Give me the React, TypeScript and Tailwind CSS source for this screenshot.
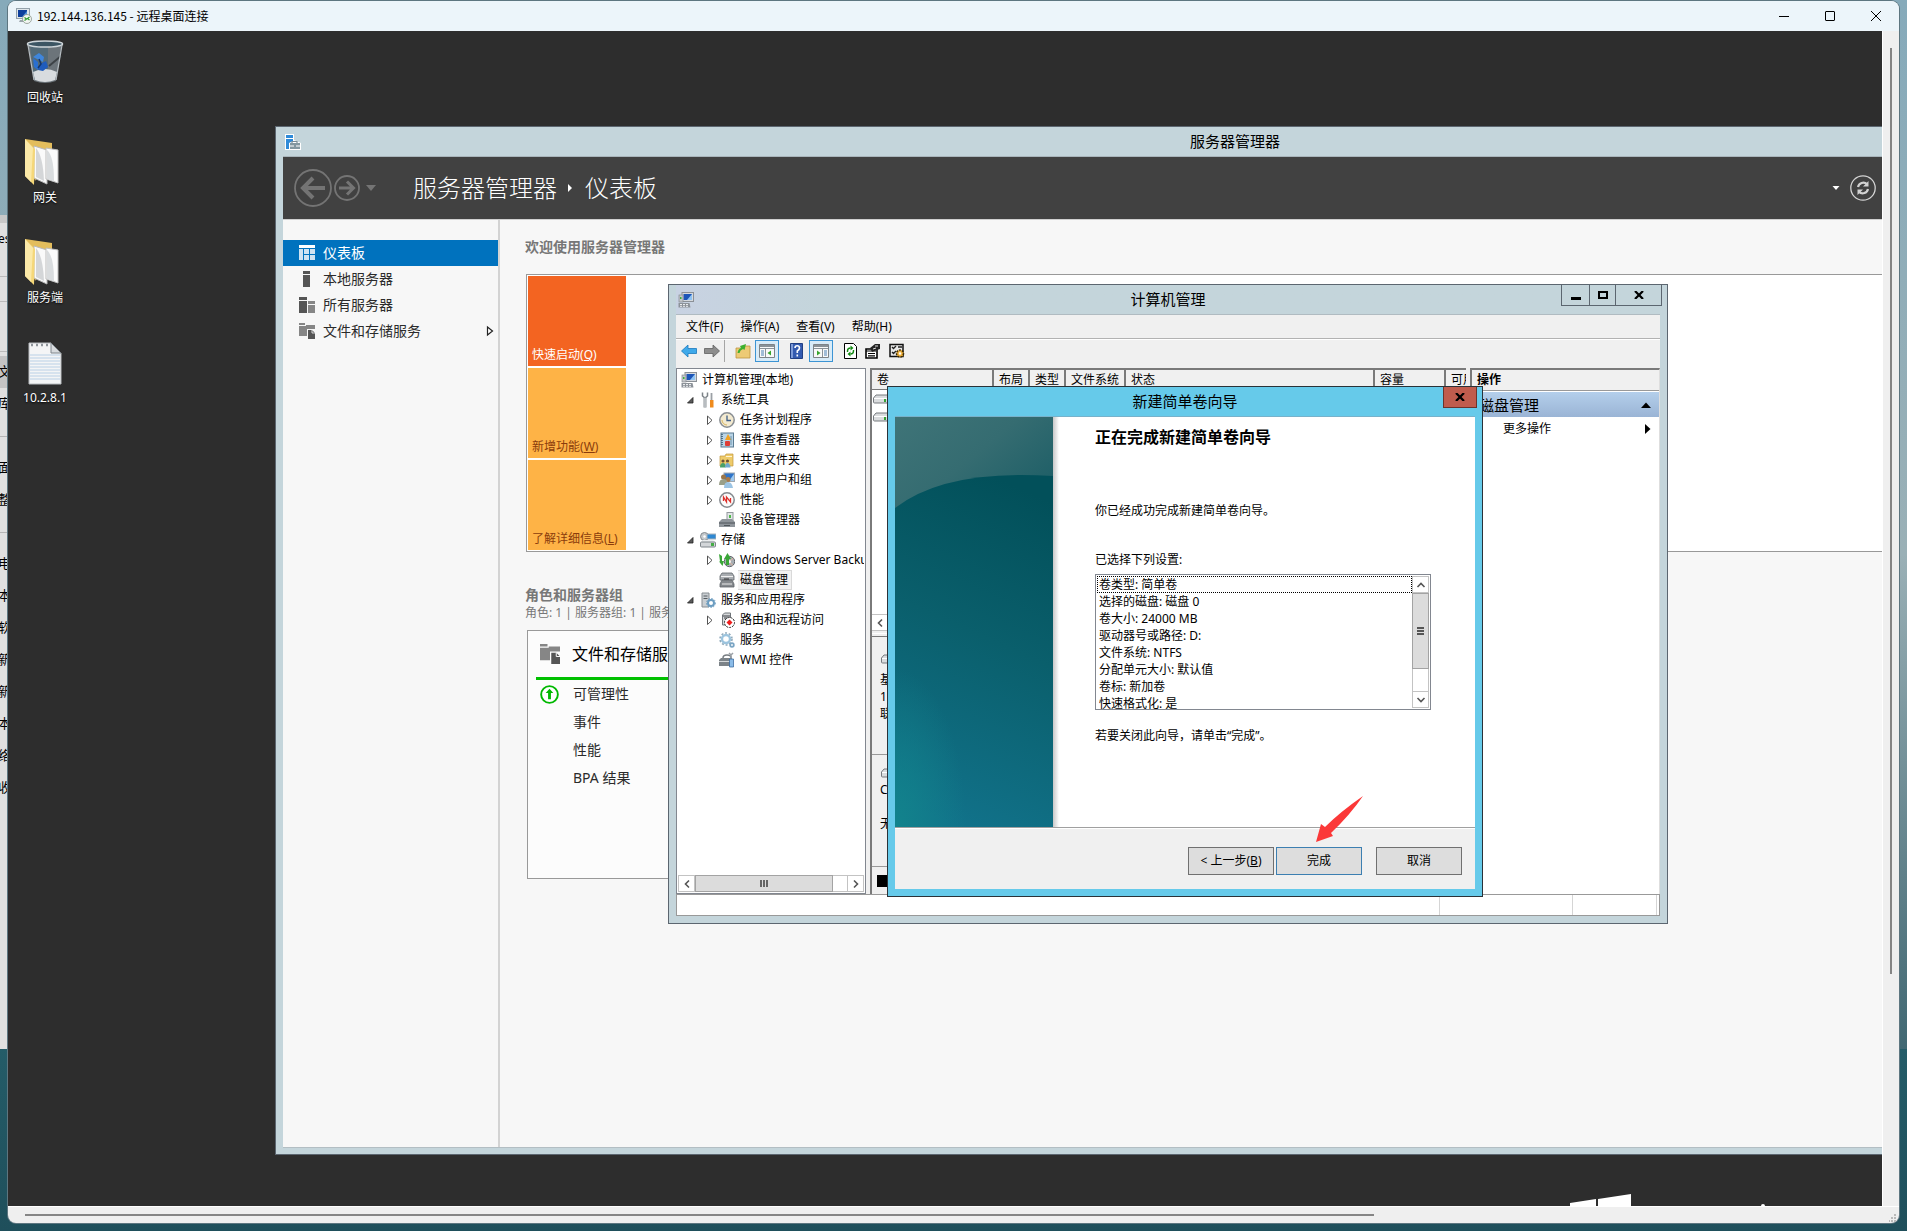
import type { ReactNode } from 'react'
import clsx from 'clsx'

const settings = [
  '卷类型: 简单卷',
  '选择的磁盘: 磁盘 0',
  '卷大小: 24000 MB',
  '驱动器号或路径: D:',
  '文件系统: NTFS',
  '分配单元大小: 默认值',
  '卷标: 新加卷',
  '快速格式化: 是',
]

const columns = [
  { label: '卷', width: 'w-[122px]' },
  { label: '布局', width: 'w-9' },
  { label: '类型', width: 'w-9' },
  { label: '文件系统', width: 'w-[60px]' },
  { label: '状态', width: 'w-[249px]' },
  { label: '容量', width: 'w-[71px]' },
  { label: '可用', width: 'w-5' },
]

type TreeItem = {
  label: string
  level: 0 | 1 | 2
  icon: ReactNode
  arrow?: 'open' | 'closed'
  selected?: boolean
}

/* ---------- icons ---------- */

function ComputerIcon() {
  return (
    <svg className="size-4 shrink-0" viewBox="0 0 16 16">
      <rect x="4" y="0.5" width="11.5" height="9" fill="#d5d9de" stroke="#8b9096" />
      <rect x="5.5" y="2" width="8.500" height="6" fill="#1c55b8" />
      <path d="M9 8L14 2v6z" fill="#8fc3f2" />
      <rect x="1" y="3" width="4" height="7" fill="#c3c7cb" stroke="#868b90" strokeWidth="0.7" />
      <rect x="2" y="5" width="1.500" height="2" fill="#3bb03b" />
      <path d="M0.500 11h11l1 4.500h-12z" fill="#8c9299" />
      <path d="M2 12.500h8M2 14.300h9" stroke="#e9ecee" strokeDasharray="2 1" />
    </svg>
  )
}

function RemoteIcon() {
  return (
    <svg className="size-4 shrink-0" viewBox="0 0 16 16">
      <rect x="0.500" y="0.500" width="13" height="10" fill="#dfe6ea" stroke="#93a1aa" />
      <rect x="2" y="2" width="9" height="7" fill="#0d3f9c" />
      <path d="M6 9l5-6v6z" fill="#4f93dc" />
      <path d="M4 12h5v2H3z" fill="#9aa5ac" />
      <circle cx="11" cy="11" r="4.500" fill="#f3f6f3" stroke="#8a958c" strokeWidth="0.8" />
      <path d="M8.500 9.500l2 1.500-2 1.500M13.500 9l-2 1.500 2 1.500" stroke="#2f9d2f" strokeWidth="1.200" fill="none" />
    </svg>
  )
}

function RecycleBinIcon() {
  return (
    <svg className="size-12" viewBox="0 0 48 48">
      <path d="M7 6h34l-6 38q-11 4-22 0z" fill="#737c83" opacity="0.9" />
      <path d="M9 8h18v36q-9 0-14-1.500z" fill="#4d6877" opacity="0.8" />
      <path d="M12 35q12-6 24 0l-2 8q-10 4-20 0z" fill="#d8dcdf" />
      <path d="M12 20l6-4 5 4-1 5z" fill="#3f86dc" />
      <path d="M12 21l5 4v8l-4-3z" fill="#2a6fd0" />
      <path d="M19 27l6-3 2 6-5 4-5-1z" fill="#1f5cbd" />
      <path d="M18 22l2 5-3 4" stroke="#12366f" strokeWidth="1.500" fill="none" />
      <path d="M40 19L28 29" stroke="#3d4246" strokeWidth="2" />
      <ellipse cx="24" cy="7" rx="17.500" ry="3" fill="#3c5563" stroke="#cfd6da" strokeWidth="1.500" />
      <path d="M7 8l6 35M41 8l-6 35" stroke="#b3babf" strokeWidth="1.300" />
    </svg>
  )
}

function FolderIcon() {
  return (
    <svg className="size-12" viewBox="0 0 48 48">
      <path d="M4 2l27 4v8L14 44z" fill="#e3bd5c" />
      <path d="M13 9l13 4v34l-13-6z" fill="#fafafa" stroke="#b9b9b9" />
      <path d="M15 11q7 8 8 33l-8-4z" fill="#d4d6d8" />
      <path d="M25 11l12 2v33l-12-4z" fill="#fbfbfb" stroke="#bdbdbd" />
      <path d="M26 13q7 6 7 31l-7-2z" fill="#d9dcde" />
      <path d="M4 2l10 10-1 36-9-9z" fill="#f5d778" />
      <path d="M4 2l8 9-2 34-6-6z" fill="#fbe9a8" />
    </svg>
  )
}

function NotepadIcon() {
  return (
    <svg className="size-12" viewBox="0 0 48 48">
      <path d="M8 6h22l10 10v31H8z" fill="#f4f5f6" stroke="#b8bcc0" />
      <path d="M30 6v10h10z" fill="#d8dbde" stroke="#7f868c" />
      <path d="M9 18h30M9 21h30M9 24h30M9 27h30M9 30h30M9 33h30M9 36h30M9 39h30M9 42h30" stroke="#b9d0e6" />
      <path d="M10 8h19" stroke="#8f959b" strokeWidth="2.500" strokeDasharray="2 3" />
    </svg>
  )
}

function ServerManagerIcon() {
  return (
    <svg className="size-4" viewBox="0 0 16 16">
      <path d="M0 0h9v6l7 3v7H0z" fill="#fff" />
      <path d="M1 1h7v3H1zM1 5h7v2L4 9v6H1z" fill="#2f8ad8" />
      <path d="M7 9V7.500h5V9" fill="none" stroke="#788b94" strokeWidth="1.200" />
      <path d="M5 9h10v6H5z" fill="#8397a0" />
      <path d="M5 12h4M11 12h4" stroke="#fff" />
    </svg>
  )
}

function DashboardIcon() {
  return (
    <svg className="size-4" viewBox="0 0 16 16">
      <path d="M0 0h16v3H0z" fill="#fff" />
      <path d="M0 4h4v11H0zM5 4h5v5H5zM11 4h5v5h-5zM5 10h5v5H5zM11 10h5v5h-5z" fill="#cfe3f2" />
    </svg>
  )
}

function ServerIcon() {
  return (
    <svg className="size-4" viewBox="0 0 16 16">
      <path d="M4 0h7v3H4zM4 4h7v12H4z" fill="#555" />
    </svg>
  )
}

function ServersIcon() {
  return (
    <svg className="size-4" viewBox="0 0 16 16">
      <path d="M0 0h8v3H0zM0 4h8v12H0z" fill="#555" />
      <path d="M9 4h7v3H9zM9 8h7v8H9z" fill="#868686" />
    </svg>
  )
}

function StorageIcon({ className }: { className: string }) {
  return (
    <svg className={className} viewBox="0 0 16 16">
      <path d="M0 0h6v2H0zM0 3h7V2h9v4H8v7H0z" fill="#868686" />
      <path d="M9 7h4l3 3v6H9z" fill="#555" />
      <path d="M13 7v3h3" fill="none" stroke="#f7f7f7" strokeWidth="0.800" />
    </svg>
  )
}

function ToolsIcon() {
  return (
    <svg className="size-4 shrink-0" viewBox="0 0 16 16">
      <path d="M2.500 0.500v3.500l2.500 2 2.500-2V0.500" stroke="#7d8388" strokeWidth="1.500" fill="none" />
      <path d="M5 5v10.500" stroke="#8e9499" strokeWidth="3" />
      <path d="M5 6v9" stroke="#e2e5e7" />
      <path d="M11.500 1v7" stroke="#9ba0a5" strokeWidth="1.800" />
      <path d="M10 8h3.500v7.500H10z" fill="#ef8b1d" />
    </svg>
  )
}

function ClockIcon() {
  return (
    <svg className="size-4 shrink-0" viewBox="0 0 16 16">
      <circle cx="8" cy="8" r="7.200" fill="#f3ead0" stroke="#898e93" strokeWidth="1.500" />
      <path d="M8 3.500V8.500h4" stroke="#3e5d86" strokeWidth="1.300" fill="none" />
      <path d="M3 8a5 5 0 0 0 5 5" stroke="#d8b560" fill="none" />
    </svg>
  )
}

function EventIcon() {
  return (
    <svg className="size-4 shrink-0" viewBox="0 0 16 16">
      <rect x="2" y="1" width="12.500" height="14" fill="#b9d4e6" stroke="#5a7b92" />
      <path d="M3 2v12" stroke="#35556d" strokeWidth="1.500" strokeDasharray="1 1" />
      <path d="M9 2l3.500 6H6z" fill="#f1a120" />
      <rect x="6" y="9" width="5" height="5" rx="1" fill="#df3d35" />
      <path d="M12 4v9" stroke="#6f94ad" />
    </svg>
  )
}

function SharedFolderIcon() {
  return (
    <svg className="size-4 shrink-0" viewBox="0 0 16 16">
      <path d="M1 4h5l1-2h7v12H1z" fill="#eecb6a" stroke="#c0973c" strokeWidth="0.700" />
      <path d="M7 4h6v1H7z" fill="#fff5d6" />
      <circle cx="4" cy="9" r="1.600" fill="#6d5136" />
      <circle cx="8.500" cy="9" r="1.600" fill="#6d5136" />
      <path d="M1 15.500q0-4.500 3-4.500t2.500 4.500z" fill="#4aa069" />
      <path d="M6 15.500q0-4.500 2.500-4.500t3 4.500z" fill="#6fa9cf" />
    </svg>
  )
}

function UsersIcon() {
  return (
    <svg className="size-4 shrink-0" viewBox="0 0 16 16">
      <rect x="5" y="1" width="10.500" height="8.500" fill="#2f74c9" stroke="#a0a8b0" />
      <path d="M10 9l5-7v7z" fill="#9fcaf0" />
      <circle cx="4.500" cy="5" r="2.500" fill="#9a7548" />
      <circle cx="9" cy="7.500" r="2.500" fill="#a87a4c" />
      <path d="M0 13q0-6 4.500-6t4 6z" fill="#9a9f88" />
      <path d="M5 16q0-6 4-6t5 6z" fill="#9cc4e4" />
    </svg>
  )
}

function PerformanceIcon() {
  return (
    <svg className="size-4 shrink-0" viewBox="0 0 16 16">
      <circle cx="8" cy="8" r="7.200" fill="#fbfbfb" stroke="#84898e" strokeWidth="1.500" />
      <path d="M4.500 9V5l3 5V5l4 5V6" stroke="#dd2f2a" strokeWidth="1.300" fill="none" />
    </svg>
  )
}

function DeviceIcon() {
  return (
    <svg className="size-4 shrink-0" viewBox="0 0 16 16">
      <rect x="8" y="0.500" width="6" height="9" fill="#e4e7e9" stroke="#94999d" />
      <path d="M10 3h2v3h-2z" fill="#4fb948" />
      <path d="M0 10l3-3h10l3 3v5H0z" fill="#8f959b" />
      <path d="M0 11h16M5 13.500h6" stroke="#4f555a" />
    </svg>
  )
}

function StorageStackIcon() {
  return (
    <svg className="size-4 shrink-0" viewBox="0 0 16 16">
      <circle cx="4.500" cy="4.500" r="4" fill="#c5c9cc" stroke="#82888d" />
      <circle cx="4.500" cy="4.500" r="1.200" fill="#fff" />
      <rect x="7" y="2" width="9" height="5" fill="#2f88d2" stroke="#a9b3bb" />
      <path d="M1 10l2-2h10l2 2z" fill="#eceeef" />
      <rect x="0.500" y="10" width="15" height="5" rx="1" fill="#d3d6d9" stroke="#7f858a" />
      <path d="M11 11h3v3h-3z" fill="#45ad45" />
    </svg>
  )
}

function BackupIcon() {
  return (
    <svg className="size-4 shrink-0" viewBox="0 0 16 16">
      <circle cx="10.500" cy="9.500" r="5.200" fill="#a8aeb3" stroke="#5e6469" />
      <path d="M10.500 9.500l4-3.500M10.500 9.500l3 4" stroke="#e4b6a2" />
      <circle cx="10.500" cy="9.500" r="1.500" fill="#f3f3f3" />
      <path d="M0 2l3 2v5h2L3.500 14 0 9.500h1zM7 13V7H5l3.500-6L12 7h-2v6z" fill="#3aa637" />
    </svg>
  )
}

function DiskIcon() {
  return (
    <svg className="size-4 shrink-0" viewBox="0 0 16 16">
      <path d="M1 4l2-3h10l2 3v4H1z" fill="#a9adb1" stroke="#5d6368" strokeWidth="0.800" />
      <path d="M2 4.500h12" stroke="#f1f1f1" />
      <path d="M1 12l2-4h10l2 4v3H1z" fill="#85898d" stroke="#5d6368" strokeWidth="0.800" />
      <path d="M3 12h10" stroke="#e9e9e9" />
      <path d="M5 7h5" stroke="#333" />
    </svg>
  )
}

function ServicesAppIcon() {
  return (
    <svg className="size-4 shrink-0" viewBox="0 0 16 16">
      <path d="M2 1h7v14H2z" fill="#c9ced2" stroke="#878d92" />
      <path d="M3.500 4h4M3.500 6.500h4" stroke="#555b60" />
      <circle cx="11" cy="11" r="3" fill="#fff" stroke="#6b9cc0" strokeWidth="2" />
      <circle cx="11" cy="11" r="4.500" fill="none" stroke="#6b9cc0" strokeDasharray="1.500 1.500" />
    </svg>
  )
}

function RoutingIcon() {
  return (
    <svg className="size-4 shrink-0" viewBox="0 0 16 16">
      <path d="M3.500 3l2-2h6v12h-8z" fill="#d6d8da" stroke="#6f7479" />
      <path d="M4 4h7M5 6h4" stroke="#3a3f44" />
      <circle cx="10.500" cy="10.500" r="5" fill="#fff" stroke="#222" strokeDasharray="2 1" />
      <path d="M10.500 7.500l3 3-3 3-3-3z" fill="#ee1c1c" />
    </svg>
  )
}

function GearsIcon() {
  return (
    <svg className="size-4 shrink-0" viewBox="0 0 16 16">
      <circle cx="7" cy="7" r="4" fill="none" stroke="#9cc4de" strokeWidth="2.400" />
      <circle cx="7" cy="7" r="6" fill="none" stroke="#8fa9ba" strokeWidth="1.600" strokeDasharray="2 1.800" />
      <circle cx="13" cy="13" r="1.800" fill="none" stroke="#7aa5c4" strokeWidth="1.800" />
    </svg>
  )
}

function WmiIcon() {
  return (
    <svg className="size-4 shrink-0" viewBox="0 0 16 16">
      <path d="M4 6q0-3 4-3t4 3" fill="none" stroke="#777d82" strokeWidth="1.500" />
      <path d="M0 8l2-2h11v8H0z" fill="#7c8388" />
      <path d="M0 9.500h12" stroke="#d5d8da" />
      <path d="M10 1l2 2 2-2M12 3v4" stroke="#9ba0a5" strokeWidth="1.500" fill="none" />
      <path d="M10.500 7h4v8h-4z" fill="#8bbce8" stroke="#2f629a" strokeWidth="0.700" />
    </svg>
  )
}

function DriveIcon() {
  return (
    <svg className="size-4 shrink-0" viewBox="0 0 16 16">
      <path d="M1.500 7L4 4h12v8H2.500q-1 0-1-1z" fill="#dadcde" stroke="#777b7f" />
      <path d="M2 7.500h13" stroke="#fff" />
      <path d="M12 8h2v3h-2z" fill="#36a336" />
    </svg>
  )
}

const tree: TreeItem[] = [
  { label: '计算机管理(本地)', level: 0, icon: <ComputerIcon /> },
  { label: '系统工具', level: 1, icon: <ToolsIcon />, arrow: 'open' },
  { label: '任务计划程序', level: 2, icon: <ClockIcon />, arrow: 'closed' },
  { label: '事件查看器', level: 2, icon: <EventIcon />, arrow: 'closed' },
  { label: '共享文件夹', level: 2, icon: <SharedFolderIcon />, arrow: 'closed' },
  { label: '本地用户和组', level: 2, icon: <UsersIcon />, arrow: 'closed' },
  { label: '性能', level: 2, icon: <PerformanceIcon />, arrow: 'closed' },
  { label: '设备管理器', level: 2, icon: <DeviceIcon /> },
  { label: '存储', level: 1, icon: <StorageStackIcon />, arrow: 'open' },
  { label: 'Windows Server Backup', level: 2, icon: <BackupIcon />, arrow: 'closed' },
  { label: '磁盘管理', level: 2, icon: <DiskIcon />, selected: true },
  { label: '服务和应用程序', level: 1, icon: <ServicesAppIcon />, arrow: 'open' },
  { label: '路由和远程访问', level: 2, icon: <RoutingIcon />, arrow: 'closed' },
  { label: '服务', level: 2, icon: <GearsIcon /> },
  { label: 'WMI 控件', level: 2, icon: <WmiIcon /> },
]

function TreeArrow({ type }: { type?: 'open' | 'closed' }) {
  return (
    <svg className="h-4 w-3.5 shrink-0" viewBox="0 0 14 16">
      {type === 'open' && <path d="M7 5.500v5.500H1.500z" fill="#5a5a5a" stroke="#222" strokeWidth="0.800" />}
      {type === 'closed' && <path d="M2.500 4v8.500l4.500-4.200z" fill="#fff" stroke="#555" />}
    </svg>
  )
}

function Chevron({ direction }: { direction: 'up' | 'down' | 'left' | 'right' }) {
  return (
    <svg
      className={clsx(
        'size-2.5',
        direction === 'down' && 'rotate-180',
        direction === 'left' && '-rotate-90',
        direction === 'right' && 'rotate-90',
      )}
      viewBox="0 0 10 10"
    >
      <path d="M1.500 7L5 3.500 8.500 7" fill="none" stroke="#555" strokeWidth="1.600" />
    </svg>
  )
}

/* ---------- desktop ---------- */

function DesktopIcon({ icon, label }: { icon: ReactNode; label: string }) {
  return (
    <li className="flex h-[100px] flex-col items-center gap-1 pt-1.5 text-white [text-shadow:0_1px_2px_#000]">
      {icon}
      <span className="leading-[18px]">{label}</span>
    </li>
  )
}

function BackgroundWindow() {
  const rows = ['文', '库', '', '面', '整', '', '电', '本', '软', '新', '新', '本', '络', '收']

  return (
    <div className="absolute top-[215px] left-0 h-[834px] w-2 overflow-hidden bg-[#e0e0e0]">
      <div className="h-2 bg-[#c8c8c8]" />
      <p className="-ml-0.5 h-[54px] border-b border-[#bbb] leading-8">es</p>
      <div className="h-[25px] border-b border-[#bbb]" />
      <div className="h-[50px] border-b border-[#bbb]" />
      <ul className="-ml-0.5 w-3 pt-1 text-[13px]">
        {rows.map((row, index) => (
          <li key={index} className={clsx('flex h-8 items-center', index === 0 && 'bg-[#c4c4c4]')}>
            {row || <span className="h-px w-full bg-[#b5b5b5]" />}
          </li>
        ))}
      </ul>
    </div>
  )
}

/* ---------- server manager ---------- */

function NavItem({
  icon,
  label,
  active,
  arrow,
}: {
  icon: ReactNode
  label: string
  active?: boolean
  arrow?: boolean
}) {
  return (
    <a
      href="#"
      className={clsx(
        'flex h-[26px] items-center gap-2 pr-1 pl-4 text-sm',
        active ? 'bg-[#0072be] text-white' : 'text-[#2b2b2b]',
      )}
    >
      {icon}
      <span className="flex-1">{label}</span>
      {arrow && (
        <svg className="h-3 w-2" viewBox="0 0 8 12">
          <path d="M1.500 2v8L6.500 6z" fill="#fff" stroke="#222" strokeWidth="1.200" />
        </svg>
      )}
    </a>
  )
}

function WelcomeTile({ label, hotkey, primary }: { label: string; hotkey: string; primary?: boolean }) {
  return (
    <button
      type="button"
      className={clsx(
        'flex h-[90px] items-end px-1 pb-0.5 text-left leading-[18px]',
        primary ? 'bg-[#f36421] text-white' : 'bg-[#feb346] text-[#8a3c0c]',
      )}
    >
      <span>
        {label}(<u>{hotkey}</u>)
      </span>
    </button>
  )
}

function ServerManager() {
  return (
    <section className="absolute top-[95px] right-0 bottom-[51px] left-[267px] flex flex-col border border-r-0 border-[#5c6670] bg-[#c4d5db] pb-1.5 pl-[7px]">
      <header className="flex h-[30px] items-center border-b border-[#a9b5bb] pl-0.5">
        <ServerManagerIcon />
        <h1 className="ml-[889px] text-[15px] leading-none text-black">服务器管理器</h1>
      </header>

      <div className="flex h-[63px] items-center border-b border-[#cfcfcf] bg-[#414141] pr-1.5 pl-[11px] text-white">
        <button type="button" aria-label="后退">
          <svg className="size-[38px]" viewBox="0 0 38 38" fill="none" stroke="#747474">
            <circle cx="19" cy="19" r="18" strokeWidth="1.800" />
            <path d="M31 19H10M19 9L9 19l10 10" strokeWidth="4" />
          </svg>
        </button>
        <button type="button" aria-label="前进" className="ml-0.5">
          <svg className="size-[26px]" viewBox="0 0 26 26" fill="none" stroke="#747474">
            <circle cx="13" cy="13" r="12" strokeWidth="1.800" />
            <path d="M5 13h14M13 6.500l6.500 6.500-6.500 6.500" strokeWidth="3" />
          </svg>
        </button>
        <svg className="ml-1.5 h-2 w-2.5" viewBox="0 0 10 8">
          <path d="M0 1h10L5 7z" fill="#747474" />
        </svg>
        <nav className="ml-[37px] flex flex-1 items-center text-2xl leading-8 font-light">
          <span>服务器管理器</span>
          <svg className="mx-2.5 size-2" viewBox="0 0 8 8">
            <path d="M1 0v8l4-4z" fill="#fff" />
          </svg>
          <span>仪表板</span>
        </nav>
        <svg className="mr-2.5 h-1.5 w-2" viewBox="0 0 8 6">
          <path d="M0.500 1h7L4 5z" fill="#fff" />
        </svg>
        <button type="button" aria-label="刷新">
          <svg className="size-[26px]" viewBox="0 0 26 26" fill="none" stroke="#d2d2d2">
            <circle cx="13" cy="13" r="12.200" strokeWidth="1.300" />
            <path d="M8 12a5.500 5.500 0 0 1 9-3M18 14a5.500 5.500 0 0 1-9 3" strokeWidth="2.200" />
            <path d="M18.500 6v5.500H13zM7.500 20v-5.500H13z" fill="#d2d2d2" stroke="none" />
          </svg>
        </button>
      </div>

      <div className="flex min-h-0 flex-1 border-b border-[#b3bec3] bg-[#f7f7f7]">
        <nav className="w-[217px] shrink-0 border-r-2 border-[#d3d3d3] pt-5">
          <NavItem icon={<DashboardIcon />} label="仪表板" active />
          <NavItem icon={<ServerIcon />} label="本地服务器" />
          <NavItem icon={<ServersIcon />} label="所有服务器" />
          <NavItem icon={<StorageIcon className="size-4" />} label="文件和存储服务" arrow />
        </nav>

        <main className="flex-1 pt-4 pl-[25px]">
          <h2 className="text-sm leading-[22px] font-bold text-[#777]">欢迎使用服务器管理器</h2>
          <div className="mt-4 ml-px border border-r-0 border-[#999] bg-white p-px">
            <div className="flex w-[98px] flex-col gap-0.5">
              <WelcomeTile label="快速启动" hotkey="Q" primary />
              <WelcomeTile label="新增功能" hotkey="W" />
              <WelcomeTile label="了解详细信息" hotkey="L" />
            </div>
          </div>

          <h2 className="mt-8 text-sm leading-[22px] font-bold text-[#777]">角色和服务器组</h2>
          <p className="leading-3.5 text-[#777]">角色: 1 | 服务器组: 1 | 服务器总数: 1</p>

          <article className="mt-2.5 ml-0.5 h-[249px] w-[300px] border border-[#999] bg-[#fcfcfc] pl-2 text-sm text-[#2b2b2b]">
            <div className="flex h-[49px] items-center gap-3 border-b-[3px] border-[#00c000] pl-1 text-base text-black">
              <StorageIcon className="size-5" />
              <h3>文件和存储服务</h3>
            </div>
            <ul className="leading-7">
              <li className="flex items-center gap-3.5 pl-1">
                <svg className="size-[19px]" viewBox="0 0 20 20">
                  <circle cx="10" cy="10" r="8.800" fill="#fff" stroke="#00b800" strokeWidth="2" />
                  <path d="M10 4l4 4.500h-2.500V15h-3V8.500H6z" fill="#00b800" />
                </svg>
                <a href="#">可管理性</a>
              </li>
              <li className="pl-[37px]">
                <a href="#">事件</a>
              </li>
              <li className="pl-[37px]">
                <a href="#">性能</a>
              </li>
              <li className="pl-[37px]">
                <a href="#">BPA 结果</a>
              </li>
            </ul>
          </article>
        </main>
      </div>
    </section>
  )
}

/* ---------- computer management ---------- */

function Toolbar() {
  return (
    <div className="flex h-[29px] items-start border-t border-white px-[5px]">
      <button type="button" aria-label="后退" className="mt-[3px]">
        <svg className="size-4" viewBox="0 0 16 16">
          <path d="M0.500 8L7 2v3.500h8.500v5H7V14z" fill="#3fa9ea" stroke="#1a78bd" strokeWidth="0.800" />
        </svg>
      </button>
      <button type="button" aria-label="前进" className="mt-[3px] ml-[7px]">
        <svg className="size-4" viewBox="0 0 16 16">
          <path d="M15.500 8L9 2v3.500H0.500v5H9V14z" fill="#8d8d8d" stroke="#5f5f5f" strokeWidth="0.800" />
        </svg>
      </button>
      <span className="ml-1 h-[22px] w-px bg-[#a5a5a5]" />
      <button type="button" aria-label="上移" className="mt-[3px] ml-2.5">
        <svg className="size-4" viewBox="0 0 16 16">
          <path d="M1 5h6l2-2h6v12H1z" fill="#edca75" stroke="#bd9642" strokeWidth="0.800" />
          <path d="M2.500 10Q3 6 6 5L5 3l6-2-1.500 6L8 6Q5 7 4.500 10z" fill="#3db02f" />
        </svg>
      </button>
      <button
        type="button"
        aria-label="显示控制台树"
        className="ml-1 flex h-[22px] w-6 items-center justify-center border border-[#3c94d4] bg-[#d8ebf8]"
      >
        <svg className="size-4" viewBox="0 0 16 16">
          <path d="M0.500 1.500h15v13h-15z" fill="#f9f9f9" stroke="#7d8388" />
          <path d="M1 2h14v2H1z" fill="#8a9298" />
          <path d="M1 5.500h14M6.500 6v8" stroke="#8a9298" />
          <path d="M2 8h3M2 10h3M2 12h3" stroke="#4a80b5" />
          <path d="M12 7.500v5L8.500 10z" fill="#36a52f" />
        </svg>
      </button>
      <button type="button" aria-label="帮助" className="mt-[3px] ml-2.5">
        <svg className="size-4" viewBox="0 0 16 16">
          <path d="M1.500 0.500h12v15h-12z" fill="#335ab0" stroke="#213f83" />
          <path d="M2 1h2v14H2z" fill="#7d9bd8" />
          <path
            d="M6 5q0-2.200 2.200-2.200T10.500 5q0 1.500-2.200 3v2M8.300 11.500v2"
            stroke="#fff"
            strokeWidth="1.600"
            fill="none"
          />
        </svg>
      </button>
      <button
        type="button"
        aria-label="显示操作窗格"
        className="ml-1 flex h-[22px] w-6 items-center justify-center border border-[#3c94d4] bg-[#d8ebf8]"
      >
        <svg className="size-4" viewBox="0 0 16 16">
          <path d="M0.500 1.500h15v13h-15z" fill="#f9f9f9" stroke="#7d8388" />
          <path d="M1 2h14v2H1z" fill="#8a9298" />
          <path d="M1 5.500h14M9.500 6v8" stroke="#8a9298" />
          <path d="M11 8h3M11 10h3M11 12h3" stroke="#4a80b5" />
          <path d="M4 7.500v5L7.500 10z" fill="#36a52f" />
        </svg>
      </button>
      <button type="button" aria-label="刷新" className="mt-[3px] ml-2.5">
        <svg className="size-4" viewBox="0 0 16 16">
          <path d="M1.500 0.500h9l3 3v12h-12z" fill="#fff" stroke="#000" />
          <path d="M4.500 9V8q0-3 3-3M10.500 7v1q0 3-3 3" stroke="#128a12" strokeWidth="1.400" fill="none" />
          <path d="M7.500 2.500v5l3-2.500zM7.500 8.500v5l-3-2.500z" fill="#128a12" />
        </svg>
      </button>
      <button type="button" aria-label="属性" className="mt-[3px] ml-1.5">
        <svg className="size-4" viewBox="0 0 16 16">
          <path d="M1 6h11v9H1z" fill="#fff" stroke="#000" strokeWidth="1.600" />
          <path d="M1 8h10M3 10.500h7M3 12.800h7" stroke="#000" strokeWidth="1.200" />
          <path d="M5 5l5-4h5v5l-3 1-5 2z" fill="#222" />
          <path d="M10 3h3M8 6l3-1" stroke="#ddd" />
        </svg>
      </button>
      <button type="button" aria-label="设置" className="mt-[3px] ml-2">
        <svg className="size-4" viewBox="0 0 16 16">
          <path d="M1 1.500h13v12H1z" fill="#e9e9e9" stroke="#111" strokeWidth="1.500" />
          <path d="M3 4l1.500 1.500L7 3M3 9l1.500 1.500L7 8M9 4h4" stroke="#222" strokeWidth="1.300" fill="none" />
          <circle cx="11" cy="10.500" r="3.500" fill="#f0b13a" stroke="#3b2a06" strokeWidth="1.500" strokeDasharray="2 1" />
          <circle cx="11" cy="10.500" r="1.200" fill="#fff" />
        </svg>
      </button>
    </div>
  )
}

function TreePane() {
  return (
    <div className="flex w-[190px] shrink-0 flex-col border border-[#828790] bg-white p-px">
      <ul className="flex-1 overflow-hidden">
        {tree.map(({ label, level, icon, arrow, selected }) => (
          <li
            key={label}
            className={clsx(
              'flex h-5 items-center whitespace-nowrap text-black',
              level === 0 && 'pl-[3px]',
              level === 1 && 'pl-2',
              level === 2 && 'pl-[27px]',
            )}
          >
            {level > 0 && <TreeArrow type={arrow} />}
            {icon}
            <span
              className={clsx(
                'ml-[3px] pr-[3px] pl-0.5 leading-[18px]',
                selected && 'border border-l-0 border-[#d9d9d9] bg-[#f2f2f2]',
              )}
            >
              {label}
            </span>
          </li>
        ))}
      </ul>
      <div className="flex h-[17px]">
        <button type="button" aria-label="向左滚动" className="flex w-[17px] items-center justify-center border border-[#c3c3c3]">
          <Chevron direction="left" />
        </button>
        <div className="flex w-[138px] items-center justify-center gap-px border border-[#a3a3a3] bg-[#dcdcdc]">
          <span className="h-[7px] w-0.5 bg-[#666]" />
          <span className="h-[7px] w-0.5 bg-[#666]" />
          <span className="h-[7px] w-0.5 bg-[#666]" />
        </div>
        <div className="flex-1 border-y border-[#c3c3c3]" />
        <button type="button" aria-label="向右滚动" className="flex w-[17px] items-center justify-center border border-[#c3c3c3]">
          <Chevron direction="right" />
        </button>
      </div>
    </div>
  )
}

function VolumePane() {
  return (
    <div className="flex min-w-0 flex-1 flex-col overflow-hidden border-t-2 border-l-2 border-[#7a7a7a] bg-[#f0f0f0]">
      <div className="h-[244px] overflow-hidden bg-white">
        <table className="w-full table-fixed border-separate border-spacing-0">
          <thead>
            <tr className="h-5 bg-[#f0f0f0]">
              {columns.map(({ label, width }) => (
                <th
                  key={label}
                  className={clsx(
                    'overflow-hidden border-r-2 border-b border-[#7a7a7a] p-0 pl-[5px] text-left leading-[18px] font-normal whitespace-nowrap last:border-r-0',
                    width,
                  )}
                >
                  {label}
                </th>
              ))}
            </tr>
          </thead>
          <tbody>
            <tr className="h-[18px]">
              <td className="p-0">
                <DriveIcon />
              </td>
            </tr>
            <tr className="h-[18px]">
              <td className="p-0">
                <DriveIcon />
              </td>
            </tr>
          </tbody>
        </table>
      </div>
      <div className="flex h-[17px] border border-l-0 border-[#c3c3c3] bg-white">
        <button type="button" aria-label="向左滚动" className="flex w-4 items-center justify-center">
          <Chevron direction="left" />
        </button>
      </div>
      <div className="mt-0.5 h-1 border-y border-t-white border-b-[#7a7a7a]" />
      <div className="h-[118px] border-b border-[#999] pt-3.5 pl-2 leading-[17px]">
        <DriveIcon />
        <p className="mt-1">基本</p>
        <p>159.88 GB</p>
        <p>联机</p>
      </div>
      <div className="h-28 border-b border-[#999] pt-2.5 pl-2 leading-[17px]">
        <DriveIcon />
        <p>CD-ROM 0</p>
        <p className="mt-[17px]">无媒体</p>
      </div>
      <div className="flex flex-1 items-center gap-1 pl-[5px]">
        <span className="size-3 bg-black" />
        未分配
      </div>
    </div>
  )
}

function ActionPane() {
  return (
    <aside className="flex w-[190px] shrink-0 flex-col border-t-2 border-r border-l-2 border-[#7a7a7a] border-r-[#dedede] bg-white text-black">
      <h3 className="h-[21px] border-b border-[#999] bg-[#f0f0f0] pl-[5px] leading-5 font-bold">操作</h3>
      <div className="mt-px flex h-[25px] items-center justify-between bg-linear-to-b from-[#b4cfeb] to-[#9ab4d5] pr-2 pl-[7px] text-[15px]">
        磁盘管理
        <svg className="h-1.5 w-2.5" viewBox="0 0 10 6">
          <path d="M0 6l5-5.500L10 6z" fill="#000" />
        </svg>
      </div>
      <button type="button" className="flex h-6 items-center justify-between pr-2 pl-[31px]">
        更多操作
        <svg className="h-2.5 w-[7px]" viewBox="0 0 7 10">
          <path d="M1 0l5.500 5L1 10z" fill="#000" />
        </svg>
      </button>
    </aside>
  )
}

function ComputerManagement() {
  return (
    <section className="absolute top-[253px] left-[660px] flex h-[640px] w-[1000px] flex-col border border-[#5c6670] bg-[#c4d5db] px-[7px] pb-[7px]">
      <header className="relative flex h-[30px] items-center border-b border-[#b0bbc1] bg-linear-to-r from-[#c8d2e2] to-[#c4d5db] to-15% pl-0.5">
        <ComputerIcon />
        <h2 className="flex-1 pr-[18px] text-center text-[15px] leading-none text-black">计算机管理</h2>
        <div className="absolute -top-px -right-0.5 flex h-[22px] border border-[#5c6670]">
          <button type="button" aria-label="最小化" className="flex w-[27px] items-center justify-center pt-1.5">
            <span className="h-[3px] w-2.5 bg-black" />
          </button>
          <button type="button" aria-label="最大化" className="flex w-[27px] items-center justify-center border-x border-[#5c6670]">
            <span className="h-2 w-2.5 border-2 border-black" />
          </button>
          <button type="button" aria-label="关闭" className="flex w-[45px] items-center justify-center">
            <svg className="h-2 w-2.5" viewBox="0 0 10 8">
              <path d="M1 0l8 8M9 0L1 8" stroke="#000" strokeWidth="2.200" />
            </svg>
          </button>
        </div>
      </header>

      <div className="flex min-h-0 flex-1 flex-col bg-[#f0f0f0]">
        <nav className="flex h-6 items-center gap-[17px] border-b border-[#b2b2b2] pl-2.5 text-black">
          <button type="button">文件(F)</button>
          <button type="button">操作(A)</button>
          <button type="button">查看(V)</button>
          <button type="button">帮助(H)</button>
        </nav>
        <Toolbar />
        <div className="flex min-h-0 flex-1 gap-1">
          <TreePane />
          <VolumePane />
          <ActionPane />
        </div>
        <footer className="flex h-[22px] border border-[#999] bg-white pr-0.5">
          <span className="flex-1" />
          <span className="w-[133px] border-l border-[#d5d5d5]" />
          <span className="w-[85px] border-x border-[#d5d5d5]" />
        </footer>
      </div>
    </section>
  )
}

/* ---------- wizard ---------- */

function WizardBanner() {
  return (
    <svg className="w-[158px] shrink-0" viewBox="0 0 158 410" preserveAspectRatio="none">
      <defs>
        <linearGradient id="sky" x1="0" y1="0" x2="1" y2="1">
          <stop offset="0" stopColor="#3f7478" />
          <stop offset="0.400" stopColor="#356c71" />
          <stop offset="1" stopColor="#0f5660" />
        </linearGradient>
        <linearGradient id="sea" x1="0.600" y1="0" x2="0.400" y2="1">
          <stop offset="0" stopColor="#02505a" />
          <stop offset="0.450" stopColor="#0a5f6c" />
          <stop offset="1" stopColor="#11728a" />
        </linearGradient>
        <radialGradient id="glow" cx="0" cy="1" r="0.450">
          <stop offset="0" stopColor="#12838c" />
          <stop offset="1" stopColor="#12838c" stopOpacity="0" />
        </radialGradient>
      </defs>
      <rect width="158" height="130" fill="url(#sky)" />
      <path d="M0 91Q50 52 158 59V410H0z" fill="url(#sea)" />
      <path d="M0 91Q50 52 158 59V410H0z" fill="url(#glow)" />
    </svg>
  )
}

function WizardButton({ children, primary }: { children: ReactNode; primary?: boolean }) {
  return (
    <button
      type="button"
      className={clsx('h-7 w-[86px] border bg-[#dddddd] text-black', primary ? 'border-[#3c7fb1]' : 'border-[#707070]')}
    >
      {children}
    </button>
  )
}

function VolumeWizard() {
  return (
    <section
      role="dialog"
      aria-labelledby="wizard-title"
      className="absolute top-[355px] left-[879px] flex w-[596px] flex-col border border-[#2a3238] bg-[#66caea] px-[7px] pb-[7px] text-black"
    >
      <header className="relative flex h-[30px] items-center justify-center border-b border-[#77b2cb]">
        <h2 id="wizard-title" className="text-[15px] leading-none">
          新建简单卷向导
        </h2>
        <button
          type="button"
          aria-label="关闭"
          className="absolute top-0 -right-0.5 flex h-[21px] w-[34px] items-center justify-center border border-t-0 border-[#6d332c] bg-[#c05c4d]"
        >
          <svg className="h-2 w-2.5" viewBox="0 0 10 8">
            <path d="M1 0l8 8M9 0L1 8" stroke="#000" strokeWidth="2.200" />
          </svg>
        </button>
      </header>

      <div className="flex h-[411px] border-b border-[#a0a0a0] bg-white">
        <WizardBanner />
        <div className="w-1.5 bg-linear-to-r from-[#c8c8c8] to-white" />
        <div className="flex-1 pt-2 pl-9">
          <h3 className="text-base leading-6 font-bold">正在完成新建简单卷向导</h3>
          <p className="mt-[53px] leading-[18px]">你已经成功完成新建简单卷向导。</p>
          <p id="settings-label" className="mt-[31px] leading-[18px]">
            已选择下列设置:
          </p>
          <div className="mt-[5px] flex h-[136px] w-[336px] overflow-hidden border border-[#828790] p-px">
            <ul role="listbox" aria-labelledby="settings-label" className="flex-1 leading-[17px]">
              {settings.map((setting, index) => (
                <li
                  key={setting}
                  role="option"
                  aria-selected={index === 0}
                  className={clsx('h-[17px] px-0.5', index === 0 && 'outline-1 -outline-offset-1 outline-black outline-dotted')}
                >
                  {setting}
                </li>
              ))}
            </ul>
            <div className="flex w-[17px] flex-col">
              <button type="button" aria-label="向上滚动" className="flex h-[17px] items-center justify-center border border-[#c3c3c3]">
                <Chevron direction="up" />
              </button>
              <div className="flex h-[76px] flex-col items-center justify-center gap-px border border-[#a3a3a3] bg-[#dcdcdc]">
                <span className="h-0.5 w-[7px] bg-[#555]" />
                <span className="h-0.5 w-[7px] bg-[#555]" />
                <span className="h-0.5 w-[7px] bg-[#555]" />
              </div>
              <div className="flex-1 border-x border-[#c3c3c3]" />
              <button type="button" aria-label="向下滚动" className="flex h-[17px] items-center justify-center border border-[#c3c3c3]">
                <Chevron direction="down" />
              </button>
            </div>
          </div>
          <p className="mt-[17px] leading-[18px]">若要关闭此向导，请单击“完成”。</p>
        </div>
      </div>

      <footer className="flex border-t border-white bg-[#f0f0f0] pt-[18px] pr-[13px] pb-3.5">
        <div className="ml-auto flex gap-0.5">
          <WizardButton>
            &lt; 上一步(<u>B</u>)
          </WizardButton>
          <WizardButton primary>完成</WizardButton>
        </div>
        <div className="ml-3.5">
          <WizardButton>取消</WizardButton>
        </div>
      </footer>
    </section>
  )
}

export default function App() {
  return (
    <div className="relative h-screen min-h-[600px] w-full overflow-hidden bg-linear-to-b from-[#86aaba] via-[#9ab0b6] via-45% to-[#1f4f5b] font-['Noto_Sans','Noto_Sans_CJK_SC',sans-serif] text-xs text-black">
      <div className="absolute inset-x-0 bottom-0 h-[182px] bg-linear-to-b from-[#245c68] to-[#1f4f5b]" />
      <BackgroundWindow />

      <div className="absolute inset-x-2 top-px bottom-2 flex flex-col overflow-hidden rounded-lg bg-[#efefef] shadow-[0_0_0_1px_#5d7680]">
        <header className="flex h-[30px] shrink-0 items-center gap-[5px] bg-[#ecf5fa] pl-2">
          <RemoteIcon />
          <h1 className="flex-1 font-['Noto_Sans_CJK_SC',sans-serif] leading-none">192.144.136.145 - 远程桌面连接</h1>
          <div className="flex h-full">
            <button type="button" aria-label="最小化" className="flex w-[46px] items-center justify-center">
              <span className="h-px w-2.5 bg-black" />
            </button>
            <button type="button" aria-label="最大化" className="flex w-[46px] items-center justify-center">
              <span className="size-2.5 rounded-[1px] border border-black" />
            </button>
            <button type="button" aria-label="关闭" className="flex w-[46px] items-center justify-center">
              <svg className="size-2.5" viewBox="0 0 10 10">
                <path d="M0 0l10 10M10 0L0 10" stroke="#000" />
              </svg>
            </button>
          </div>
        </header>

        <div className="flex min-h-0 flex-1">
          <div className="relative flex-1 overflow-hidden bg-[#2d2d2d]">
            <ul className="w-[74px]">
              <DesktopIcon icon={<RecycleBinIcon />} label="回收站" />
              <DesktopIcon icon={<FolderIcon />} label="网关" />
              <DesktopIcon icon={<FolderIcon />} label="服务端" />
              <DesktopIcon icon={<NotepadIcon />} label="10.2.8.1" />
            </ul>

            <svg className="absolute bottom-0 left-[1562px] h-3 w-[200px]" viewBox="0 0 200 12" fill="#fff">
              <path d="M0 9l26-4v7H0zM28 5l33-5v12H28z" />
              <circle cx="193" cy="12" r="2" />
            </svg>

            <ServerManager />
            <ComputerManagement />
            <VolumeWizard />

            <svg className="absolute top-[764px] left-[1306px] h-12 w-[52px]" viewBox="0 0 52 48">
              <path d="M2 47L7 29l4 3Q26 17 49 1 36 20 17 38l2 3z" fill="#fb3838" />
            </svg>
          </div>
          <div className="w-[17px] border-l border-white pt-[17px] pl-[7px]">
            <div className="h-4/5 w-0.5 bg-[#858585]" />
          </div>
        </div>

        <footer className="flex h-[17px] shrink-0 items-start justify-between border-t border-white pt-[7px] pl-[17px]">
          <div className="h-0.5 w-[72%] bg-[#858585]" />
          <svg className="size-2.5" viewBox="0 0 10 10" fill="#b9b9b9">
            <path d="M5 0h2v2H5zM5 3h2v2H5zM2 3h2v2H2zM5 6h2v2H5zM2 6h2v2H2zM-1 6h2v2h-2z" />
          </svg>
        </footer>
      </div>
    </div>
  )
}
